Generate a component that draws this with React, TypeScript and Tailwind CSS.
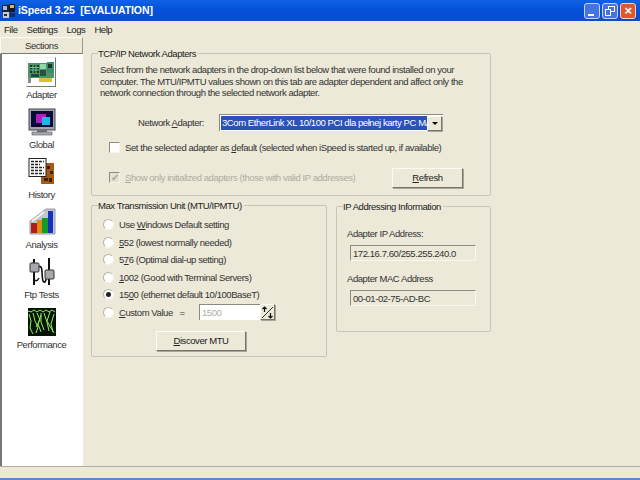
import React from 'react';

const sections = ['Adapter', 'Global', 'History', 'Analysis', 'Ftp Tests', 'Performance'];

const AppIcon = () => (
  <svg width="16" height="16" viewBox="0 0 16 16">
    <rect x="1" y="2" width="7" height="7" fill="#14233f" />
    <rect x="2" y="3" width="4" height="4" fill="#a9b8d4" />
    <rect x="8" y="1" width="6" height="8" fill="#19181f" />
    <rect x="9" y="2" width="4" height="3" fill="#d9b65a" />
    <rect x="2" y="9" width="6" height="6" fill="#d0ccc0" />
    <rect x="3" y="11" width="3" height="2" fill="#2a2a3a" />
    <rect x="9" y="10" width="5" height="4" fill="#1d2c48" />
  </svg>
);

const AdapterIcon = () => (
  <svg width="28" height="28" viewBox="0 0 28 28">
    <rect x="1" y="5" width="26" height="15" fill="#4f9468" />
    <rect x="3" y="7" width="9" height="8" fill="#143c2c" />
    <path d="M3 9.5h9M3 12h9M6 7v8M9 7v8" stroke="#79c48f" strokeWidth="1" />
    <rect x="13" y="6" width="6" height="5" fill="#8fd8ac" />
    <rect x="20" y="4" width="7" height="11" fill="#3c8c66" />
    <rect x="21" y="6" width="4" height="4" fill="#14382c" />
    <rect x="4" y="16" width="8" height="3" fill="#1d4a36" />
    <rect x="13" y="12" width="6" height="6" fill="#25523c" />
    <rect x="12" y="20" width="13" height="4" fill="#dcc030" />
    <rect x="1" y="20" width="3" height="5" fill="#8c8c8c" />
  </svg>
);

const GlobalIcon = () => (
  <svg width="28" height="28" viewBox="0 0 28 28">
    <rect x="1" y="1" width="26" height="21" fill="#a2a2ac" stroke="#44444e" />
    <rect x="3" y="3" width="22" height="16" fill="#060a38" />
    <rect x="8" y="6" width="10" height="9" fill="#b020c0" />
    <rect x="14" y="9" width="8" height="8" fill="#18b8e8" />
    <rect x="9" y="22" width="10" height="2" fill="#70707a" />
    <rect x="4" y="24" width="20" height="3" fill="#a8a8b2" stroke="#55555f" strokeWidth="0.6" />
  </svg>
);

const HistoryIcon = () => (
  <svg width="28" height="28" viewBox="0 0 28 28">
    <rect x="13" y="5" width="13" height="21" fill="#a65a14" />
    <path d="M19 8h3v3h-3zM22 13h3v3h-3zM16 20h4v3h-4zM21 20h3v4h-3z" fill="#38200c" />
    <rect x="1" y="0.5" width="17" height="18" fill="#ffffff" stroke="#222222" />
    <path d="M3 3.5h13M3 6.5h9M3 9.5h13M3 12.5h11M3 15.5h13" stroke="#222222" strokeWidth="1.3" strokeDasharray="3 1" />
  </svg>
);

const AnalysisIcon = () => (
  <svg width="28" height="28" viewBox="0 0 28 28">
    <path d="M2 26V13L18 1h9v25z" fill="#c4c4cc" stroke="#9898a4" />
    <path d="M4 13l7-5 5-4" stroke="#f4f4f4" strokeWidth="2" fill="none" />
    <rect x="3" y="15" width="6" height="10" fill="#b01c1c" />
    <rect x="9" y="12" width="5" height="13" fill="#e08a10" />
    <rect x="14" y="10" width="6" height="15" fill="#169a28" />
    <rect x="20" y="3" width="5" height="22" fill="#1830c0" />
  </svg>
);

const FtpIcon = () => (
  <svg width="28" height="28" viewBox="0 0 28 28">
    <path d="M6 1v4M6 14v13M21 0v12M21 21v6" stroke="#111111" strokeWidth="2" fill="none" />
    <path d="M10 9c6-3 3 9 5 14 2 3 3-1 3-2" stroke="#111111" strokeWidth="1.6" fill="none" />
    <path d="M11 20c-2 4-4 3-5 1" stroke="#111111" strokeWidth="1.4" fill="none" />
    <rect x="2" y="5" width="9" height="9" rx="1" fill="#a8a8ac" stroke="#333333" />
    <rect x="17" y="12" width="9" height="9" rx="1" fill="#a8a8ac" stroke="#333333" />
  </svg>
);

const PerformanceIcon = () => (
  <svg width="28" height="28" viewBox="0 0 28 28">
    <rect width="28" height="28" fill="#041404" />
    <path d="M0 3l3 1 3-2 3 2 3-2 3 2 3-2 3 2 3-2 3 2M1 6l2 7-1 7 3 6M5 5l2 8 3 6-2 6M9 5l3 7-4 7M13 7l-3 9 3 8M16 5l3 9 2 9M22 4l-3 9 4 7 3 5M26 6l-3 10 2 8M13 5v9l3 8" stroke="#96ec60" strokeWidth="1" fill="none" />
  </svg>
);

const icons = [AdapterIcon, GlobalIcon, HistoryIcon, AnalysisIcon, FtpIcon, PerformanceIcon];

const Group: React.FC<{ title: string; className: string; children: React.ReactNode }> = ({ title, className, children }) => (
  <fieldset className={`border border-[#c8c5b6] rounded-[2px] pl-[7px] pr-[8px] ${className}`}>
    <legend className="-ml-[1px] pr-[2px] text-[#222]">{title}</legend>
    {children}
  </fieldset>
);

const Radio: React.FC<{ checked?: boolean }> = ({ checked }) => (
  <span className="w-[11px] h-[11px] rounded-full bg-white border border-t-[#b5b3a5] border-l-[#b5b3a5] border-r-[#f4f3ec] border-b-[#f4f3ec] flex items-center justify-center shrink-0">
    {checked && <span className="w-[5px] h-[5px] rounded-full bg-[#222]" />}
  </span>
);

const Btn: React.FC<{ className: string; children: React.ReactNode }> = ({ className, children }) => (
  <div className={`flex items-center justify-center bg-[#ece9d8] border border-t-[#fbfaf4] border-l-[#fbfaf4] border-r-[#77756a] border-b-[#77756a] shadow-[1px_1px_0_#a8a698] text-[#222] ${className}`}>
    {children}
  </div>
);

const mtuRows: React.ReactNode[] = [
  <>Use <u>W</u>indows Default setting</>,
  <><u>5</u>52 (lowest normally needed)</>,
  <>5<u>7</u>6 (Optimal dial-up setting)</>,
  <><u>1</u>002 (Good with Terminal Servers)</>,
  <>15<u>0</u>0 (ethernet default 10/100BaseT)</>,
];

export default function App() {
  return (
    <div className="w-[640px] h-[480px] flex flex-col bg-[#ece9d8] overflow-hidden text-[9.5px] tracking-[-0.43px] leading-[13px] text-[#333] whitespace-nowrap font-['Liberation_Sans',Arial,sans-serif]">
      {/* title bar */}
      <div className="h-[21px] shrink-0 flex items-center bg-gradient-to-b from-[#0f62e4] via-[#0451d8] to-[#0a4cd0] pl-[1px] pr-[4px]">
        <AppIcon />
        <span className="ml-[1px] text-white font-bold text-[10.5px] tracking-[-0.1px] whitespace-pre">iSpeed 3.25  [EVALUATION]</span>
        <div className="ml-auto flex gap-[2px]">
          <div className="w-[16px] h-[16px] rounded-[3px] bg-[#4474e4] border border-[#c8d4f4] flex items-end pl-[3px] pb-[2px]">
            <span className="w-[6px] h-[2px] bg-white" />
          </div>
          <div className="w-[16px] h-[16px] rounded-[3px] bg-[#4474e4] border border-[#c8d4f4] relative">
            <span className="absolute left-[5px] top-[2px] w-[7px] h-[6px] border border-white" />
            <span className="absolute left-[2px] top-[5px] w-[6px] h-[7px] border border-white bg-[#4474e4]" />
          </div>
          <div className="w-[16px] h-[16px] rounded-[3px] bg-[#e0562c] border border-[#f4d4c8] flex items-center justify-center text-white font-bold text-[13px] leading-none">×</div>
        </div>
      </div>

      {/* menu */}
      <div className="h-[16px] shrink-0 flex items-center gap-[9px] pl-[4px] text-[#222]">
        <span>File</span>
        <span>Settings</span>
        <span>Logs</span>
        <span>Help</span>
      </div>

      {/* body */}
      <div className="flex-1 flex min-h-0">
        {/* sidebar */}
        <div className="w-[83px] shrink-0 flex flex-col">
          <div className="h-[17px] shrink-0 flex items-center justify-center bg-[#ece9d8] border border-t-[#fbfaf4] border-l-[#fbfaf4] border-r-[#9a988a] border-b-[#7c7a6e] text-[#333]">Sections</div>
          <div className="flex-1 border-l-2 border-[#777] bg-white flex flex-col items-center pt-[3px] pr-[2px]">
            {sections.map((name, i) => {
              const Icon = icons[i];
              return (
                <div key={name} className="h-[50px] flex flex-col items-center">
                  <div className={`w-[30px] h-[30px] flex items-center justify-center ${i === 0 ? 'border border-t-[#f4f4f0] border-l-[#f4f4f0] border-r-[#777] border-b-[#777]' : ''}`}>
                    <Icon />
                  </div>
                  <span className="mt-[1px] text-[#333]">{name}</span>
                </div>
              );
            })}
          </div>
        </div>

        {/* content */}
        <div className="flex-1 pl-[8px] pt-[10px] flex flex-col gap-[3px]">
          <Group title="TCP/IP Network Adapters" className="h-[149px] w-[400px]">
            <p className="leading-[11.5px] mt-[4px] ml-[1px] text-[#333]">
              Select from the network adapters in the drop-down list below that were found installed on your<br />
              computer. The MTU/IPMTU values shown on this tab are adapter dependent and affect only the<br />
              network connection through the selected network adapter.
            </p>
            <div className="flex items-center mt-[15px] ml-[39px]">
              <span className="w-[81px]">Network <u>A</u>dapter:</span>
              <div className="w-[224px] h-[17px] flex bg-white border-t border-l border-[#8d8b7e] pl-[1px] pt-[1px] pr-[1px]">
                <div className="w-[206px] h-[14px] bg-[#2a52b8] text-white overflow-hidden pl-[1px] leading-[14px]">3Com EtherLink XL 10/100 PCI dla pełnej karty PC MA</div>
                <Btn className="w-[15px] h-[15px]">
                  <span className="w-0 h-0 border-x-[3px] border-x-transparent border-t-[3px] border-t-black" />
                </Btn>
              </div>
            </div>
            <div className="flex items-center mt-[10px] ml-[10px]">
              <span className="w-[11px] h-[11px] bg-white border border-t-[#8d8b7e] border-l-[#8d8b7e] border-r-[#f4f3ec] border-b-[#f4f3ec] shrink-0" />
              <span className="ml-[5px]">Set the selected adapter as <u>d</u>efault (selected when iSpeed is started up, if available)</span>
            </div>
            <div className="flex items-center mt-[14px] ml-[10px]">
              <span className="w-[11px] h-[11px] bg-[#e4e1d0] border border-t-[#8d8b7e] border-l-[#8d8b7e] border-r-[#f4f3ec] border-b-[#f4f3ec] shrink-0 flex items-center justify-center text-[#a8a698] font-bold text-[10px] leading-none">✓</span>
              <span className="ml-[5px] text-[#aeac9e]"><u>S</u>how only initialized adapters (those with valid IP addresses)</span>
              <Btn className="ml-auto mr-[19px] w-[71px] h-[20px]"><span><u>R</u>efresh</span></Btn>
            </div>
          </Group>

          <div className="flex items-start gap-[9px]">
            <Group title="Max Transmission Unit (MTU/IPMTU)" className="w-[236px] h-[158px]">
              <div className="flex flex-col ml-[4px] mt-[4px]">
                {mtuRows.map((row, i) => (
                  <div key={i} className="h-[17.5px] flex items-center gap-[5px]">
                    <Radio checked={i === 4} />
                    <span>{row}</span>
                  </div>
                ))}
                <div className="h-[17px] flex items-center">
                  <Radio />
                  <span className="ml-[5px] w-[80px]"><u>C</u>ustom Value&nbsp;&nbsp; =</span>
                  <div className="w-[61px] h-[16px] bg-white border-t border-l border-[#8d8b7e] text-[#aeac9e] pl-[2px] leading-[15px]">1500</div>
                  <Btn className="w-[15px] h-[16px]">
                    <svg width="13" height="13" viewBox="0 0 13 13">
                      <path d="M1 12L12 1" stroke="#333" />
                      <path d="M3.5 1v5M1.5 3l2-2 2 2M9.5 7v5M7.5 10l2 2 2-2" stroke="#111" fill="none" strokeWidth="1.2" />
                    </svg>
                  </Btn>
                </div>
                <div className="flex justify-start mt-[10px] ml-[53px]">
                  <Btn className="w-[90px] h-[20px]"><span><u>D</u>iscover MTU</span></Btn>
                </div>
              </div>
            </Group>

            <Group title="IP Addressing Information" className="w-[155px] h-[132px] mt-[1px]">
              <div className="mt-[14px] ml-[3px]">Adapter IP Address:</div>
              <div className="mt-[5px] ml-[6px] w-[126px] h-[16px] border border-t-[#8d8b7e] border-l-[#8d8b7e] border-r-[#f8f7f0] border-b-[#f8f7f0] pl-[2px] leading-[15px]">172.16.7.60/255.255.240.0</div>
              <div className="mt-[11px] ml-[3px]">Adapter MAC Address</div>
              <div className="mt-[5px] ml-[6px] w-[126px] h-[16px] border border-t-[#8d8b7e] border-l-[#8d8b7e] border-r-[#f8f7f0] border-b-[#f8f7f0] pl-[2px] leading-[15px]">00-01-02-75-AD-BC</div>
            </Group>
          </div>
        </div>
      </div>

      {/* status bar */}
      <div className="h-[12px] shrink-0 border-t border-[#b0aea2]" />
      <div className="h-[2px] shrink-0 bg-[#5b8ad0]" />
    </div>
  );
}
